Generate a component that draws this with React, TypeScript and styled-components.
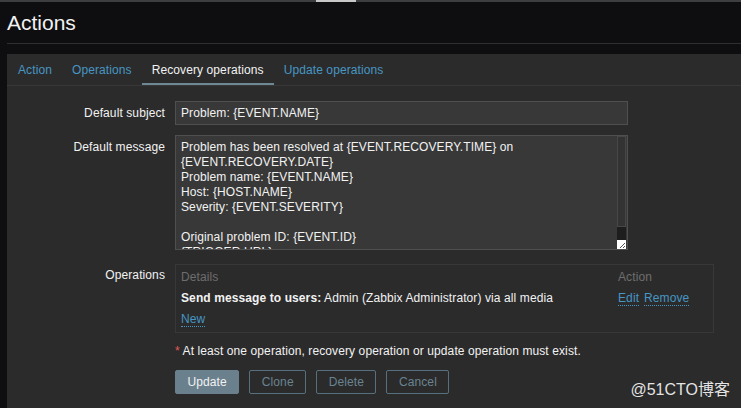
import styled, { createGlobalStyle } from 'styled-components';

const GlobalStyle = createGlobalStyle`
	html, body {
		margin: 0;
		padding: 0;
		background: #0e0e10;
		overflow: hidden;
	}
	body {
		font-family: 'Liberation Sans', Arial, sans-serif;
		font-size: 12px;
		letter-spacing: 0.1px;
		color: #f2f2f2;
	}
`;

const tabs = ['Action', 'Operations', 'Recovery operations', 'Update operations'];

const message = `Problem has been resolved at {EVENT.RECOVERY.TIME} on {EVENT.RECOVERY.DATE}
Problem name: {EVENT.NAME}
Host: {HOST.NAME}
Severity: {EVENT.SEVERITY}

Original problem ID: {EVENT.ID}
{TRIGGER.URL}`;

export default function App() {
	return (
		<Root>
			<GlobalStyle />
			<TopStrip>
				<StripSegment style={{ width: 316 }} />
				<StripSegment $active style={{ width: 40 }} />
				<StripSegment style={{ flex: 1 }} />
			</TopStrip>
			<Page>
				<Header>
					<Title>Actions</Title>
				</Header>
				<Panel>
					<TabList>
						{tabs.map(t => (
							<Tab key={t} $active={t === 'Recovery operations'}>
								{t}
							</Tab>
						))}
					</TabList>
					<Form>
						<Label>Default subject</Label>
						<Input>Problem: {'{EVENT.NAME}'}</Input>

						<Label>Default message</Label>
						<TextArea>
							<TextContent>{message}</TextContent>
							<Scrollbar>
								<Thumb />
								<Track />
								<Resizer>
									<svg width="9" height="9" viewBox="0 0 9 9">
										<rect x="7" y="3" width="1" height="1" fill="#555" />
										<rect x="6" y="4" width="1" height="1" fill="#555" />
										<rect x="5" y="5" width="1" height="1" fill="#555" />
										<rect x="4" y="6" width="1" height="1" fill="#555" />
										<rect x="3" y="7" width="1" height="1" fill="#555" />
										<rect x="7" y="6" width="1" height="1" fill="#555" />
										<rect x="6" y="7" width="1" height="1" fill="#555" />
									</svg>
								</Resizer>
							</Scrollbar>
						</TextArea>

						<Label $top={4}>Operations</Label>
						<OpsBox>
							<OpsHead>Details</OpsHead>
							<OpsHead>Action</OpsHead>
							<OpsCell>
								<b>Send message to users:</b> Admin (Zabbix Administrator) via all media
							</OpsCell>
							<OpsCell>
								<LinkText $gap>Edit</LinkText>
								<LinkText>Remove</LinkText>
							</OpsCell>
							<OpsCell>
								<LinkText>New</LinkText>
							</OpsCell>
						</OpsBox>

						<ErrorLine>
							<Star>*</Star> At least one operation, recovery operation or update operation
							must exist.
						</ErrorLine>

						<ButtonRow>
							<Button $primary>Update</Button>
							<Button>Clone</Button>
							<Button>Delete</Button>
							<Button>Cancel</Button>
						</ButtonRow>
					</Form>
				</Panel>
			</Page>
			<Watermark>@51CTO博客</Watermark>
		</Root>
	);
}

const Root = styled.div`
	position: relative;
	width: 741px;
	height: 408px;
	overflow: hidden;
`;

const TopStrip = styled.div`
	display: flex;
	height: 2px;
`;

const StripSegment = styled.div<{ $active?: boolean }>`
	background: ${p => (p.$active ? '#c8c8c8' : '#3d3e40')};
`;

const Page = styled.div`
	padding-left: 7px;
`;

const Header = styled.div`
	padding: 9px 0 8px;
	border-bottom: 1px solid #2e2e30;
	margin-bottom: 10px;
`;

const Title = styled.h1`
	margin: 0;
	font-size: 21px;
	line-height: 24px;
	font-weight: normal;
	letter-spacing: 0;
	color: #f2f2f2;
`;

const Panel = styled.div`
	background: #2b2b2b;
	height: 354px;
`;

const TabList = styled.div`
	display: flex;
	height: 31px;
	padding-left: 1px;
	border-bottom: 1px solid #383838;
`;

const Tab = styled.div<{ $active?: boolean }>`
	display: flex;
	align-items: center;
	padding: 0 10px;
	color: ${p => (p.$active ? '#f2f2f2' : '#4796c4')};
	box-shadow: ${p => (p.$active ? 'inset 0 -2px 0 #6e8794' : 'none')};
`;

const Form = styled.div`
	display: grid;
	grid-template-columns: 158px 1fr;
	column-gap: 10px;
	row-gap: 10px;
	padding-top: 15px;
`;

const Label = styled.div<{ $top?: number }>`
	text-align: right;
	line-height: 24px;
	margin-top: ${p => (p.$top ? p.$top - 1 : 0)}px;
`;

const Input = styled.div`
	box-sizing: border-box;
	width: 453px;
	height: 24px;
	line-height: 22px;
	padding: 0 5px;
	background: #383838;
	border: 1px solid #4f4f4f;
`;

const TextArea = styled.div`
	box-sizing: border-box;
	display: flex;
	width: 453px;
	height: 115px;
	background: #383838;
	border: 1px solid #4f4f4f;
`;

const TextContent = styled.div`
	flex: 1;
	padding: 4px 5px;
	line-height: 15px;
	white-space: pre-wrap;
	overflow: hidden;
`;

const Scrollbar = styled.div`
	display: flex;
	flex-direction: column;
	width: 9px;
	margin-right: 1px;
`;

const Thumb = styled.div`
	box-sizing: border-box;
	height: 91px;
	background: #333333;
	border: 1px solid #474747;
`;

const Track = styled.div`
	height: 13px;
	background: #1e1e1e;
`;

const Resizer = styled.div`
	height: 9px;
	background: #ffffff;
	display: flex;
`;

const OpsBox = styled.div`
	box-sizing: border-box;
	width: 539px;
	margin-top: 4px;
	display: grid;
	grid-template-columns: 1fr 90px;
	padding: 2px 5px 2px;
	border: 1px solid #383838;
	line-height: 21px;
`;

const OpsHead = styled.div`
	color: #6e6e6e;
`;

const OpsCell = styled.div`
	white-space: nowrap;
`;

const LinkText = styled.span<{ $gap?: boolean }>`
	color: #4796c4;
	border-bottom: 1px dotted #4796c4;
	margin-right: ${p => (p.$gap ? 5 : 0)}px;
`;

const ErrorLine = styled.div`
	grid-column: 2;
	line-height: 14px;
	margin-top: 1px;
`;

const Star = styled.span`
	color: #e45959;
`;

const ButtonRow = styled.div`
	grid-column: 2;
	display: flex;
	gap: 10px;
	margin-top: 2px;
`;

const Button = styled.div<{ $primary?: boolean }>`
	box-sizing: border-box;
	height: 24px;
	line-height: 22px;
	padding: 0 11.5px;
	border-radius: 2px;
	border: 1px solid ${p => (p.$primary ? '#6a808d' : '#56707e')};
	background: ${p => (p.$primary ? '#6a808d' : 'transparent')};
	color: ${p => (p.$primary ? '#f2f2f2' : '#6a8391')};
	font-size: 12px;
`;

const Watermark = styled.div`
	position: absolute;
	right: 11px;
	bottom: 9px;
	font-family: 'Liberation Sans', 'Noto Sans CJK SC', sans-serif;
	font-size: 16px;
	line-height: 18px;
	letter-spacing: 0;
	color: #e4e4e4;
	text-shadow: 0 0 1px #222;
`;
